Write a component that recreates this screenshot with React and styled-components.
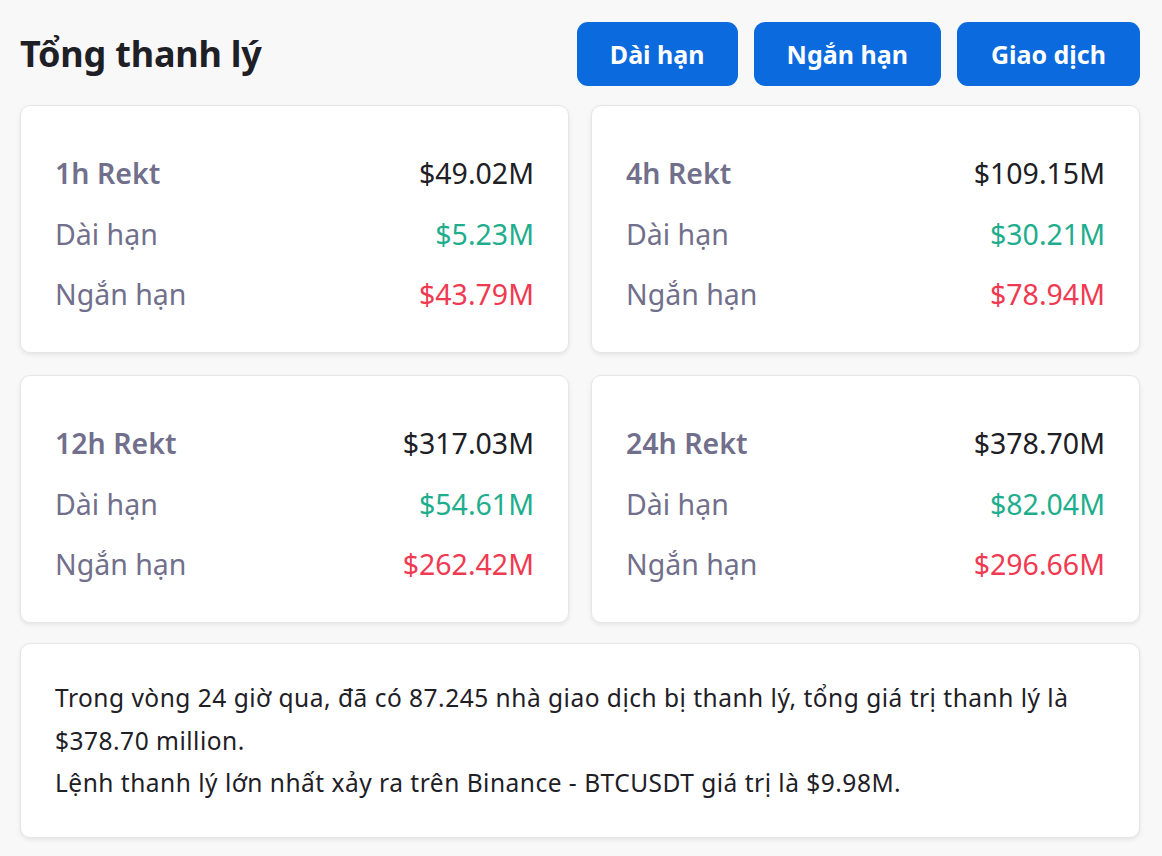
import React from "react";
import styled, { createGlobalStyle } from "styled-components";

const Global = createGlobalStyle`
  html, body { margin: 0; padding: 0; background: #f8f8f8; }
  body { font-family: "Noto Sans", "Open Sans", sans-serif; }
  * { box-sizing: border-box; }
`;

const Page = styled.div`
  width: 1162px;
  min-height: 856px;
  padding: 22px 22px 0 20px;
  display: flex;
  flex-direction: column;
  gap: 20px;
`;

const Header = styled.div`
  display: flex;
  align-items: center;
  justify-content: space-between;
  height: 63px;
`;

const Title = styled.h1`
  margin: 0;
  font-size: 36px;
  font-weight: 700;
  color: #1e2026;
  letter-spacing: -0.2px;
`;

const Buttons = styled.div`
  display: flex;
  gap: 16px;
`;

const Button = styled.button`
  height: 64px;
  padding: 0 ${(p) => p.$pad}px;
  border: none;
  border-radius: 11px;
  background: #0a6ade;
  color: #fff;
  font-family: inherit;
  font-size: 25px;
  font-weight: 700;
  cursor: pointer;
`;

const Grid = styled.div`
  display: grid;
  grid-template-columns: 1fr 1fr;
  gap: 22px;
`;

const Card = styled.div`
  background: #fff;
  border: 1px solid #e6e6e6;
  border-radius: 10px;
  box-shadow: 0 2px 4px rgba(0, 0, 0, 0.08);
  height: 248px;
  padding: 37px 34px 0 34px;
  display: flex;
  flex-direction: column;
`;

const Row = styled.div`
  display: flex;
  justify-content: space-between;
  align-items: center;
  height: 60.5px;
  font-size: 28.5px;
`;

const Label = styled.span`
  color: #716f8b;
  font-weight: ${(p) => (p.$bold ? 600 : 400)};
`;

const Value = styled.span`
  color: ${(p) => p.$color};
`;

const Summary = styled.div`
  background: #fff;
  border: 1px solid #e6e6e6;
  border-radius: 10px;
  box-shadow: 0 2px 4px rgba(0, 0, 0, 0.08);
  height: 195px;
  padding: 33px 34px;
  font-size: 24.5px;
  letter-spacing: 0.5px;
  line-height: 42.5px;
  color: #1e2026;
`;

const DARK = "#1e2026";
const GREEN = "#1fae8d";
const RED = "#ef3a52";

const data = [
  { label: "1h Rekt", total: "$49.02M", long: "$5.23M", short: "$43.79M" },
  { label: "4h Rekt", total: "$109.15M", long: "$30.21M", short: "$78.94M" },
  { label: "12h Rekt", total: "$317.03M", long: "$54.61M", short: "$262.42M" },
  { label: "24h Rekt", total: "$378.70M", long: "$82.04M", short: "$296.66M" },
];

export default function App() {
  return (
    <>
      <Global />
      <Page>
        <Header>
          <Title>Tổng thanh lý</Title>
          <Buttons>
            <Button $pad={33}>Dài hạn</Button>
            <Button $pad={33}>Ngắn hạn</Button>
            <Button $pad={34}>Giao dịch</Button>
          </Buttons>
        </Header>
        <Grid>
          {data.map((d) => (
            <Card key={d.label}>
              <Row>
                <Label $bold>{d.label}</Label>
                <Value $color={DARK}>{d.total}</Value>
              </Row>
              <Row>
                <Label>Dài hạn</Label>
                <Value $color={GREEN}>{d.long}</Value>
              </Row>
              <Row>
                <Label>Ngắn hạn</Label>
                <Value $color={RED}>{d.short}</Value>
              </Row>
            </Card>
          ))}
        </Grid>
        <Summary>
          Trong vòng 24 giờ qua, đã có 87.245 nhà giao dịch bị thanh lý, tổng giá trị thanh lý là $378.70 million.
          <br />
          Lệnh thanh lý lớn nhất xảy ra trên Binance - BTCUSDT giá trị là $9.98M.
        </Summary>
      </Page>
    </>
  );
}
